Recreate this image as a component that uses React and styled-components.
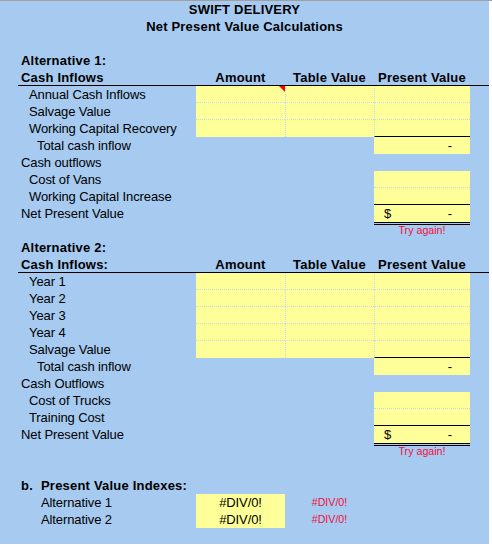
import React from 'react';
import styled, { createGlobalStyle, css } from 'styled-components';

const GlobalStyle = createGlobalStyle`
    html, body {
        margin: 0;
        padding: 0;
        background: #fff;
    }
    body {
        font-family: "Liberation Sans", Arial, sans-serif;
        font-size: 13px;
        letter-spacing: -0.1px;
        color: #000;
    }
`;

const Frame = styled.div`
    width: 492px;
    border-top: 1px solid #a0a0a0;
`;

const Sheet = styled.div`
    width: 489px;
    height: 543px;
    background: #a6caf0;
`;

const TitleLine = styled.div`
    height: 17px;
    line-height: 17px;
    text-align: center;
    font-weight: 700;
    letter-spacing: 0.2px;
`;

const Body = styled.div`
    padding-left: 18px;
`;

const Row = styled.div`
    display: grid;
    grid-template-columns: 178px 89px 89px 96px;
    grid-template-rows: 1fr;
    height: 17px;
    line-height: 17px;
    box-sizing: border-box;
    ${(p) => p.$rule && 'border-bottom: 1px solid #000;'}
`;

const rules = {
    dot: '1px dotted #c4d8f6',
    solid: '1px solid #000',
};

const Cell = styled.div`
    position: relative;
    box-sizing: border-box;
    white-space: nowrap;
    background: ${(p) => (p.$fill ? '#ffff99' : 'transparent')};
    border-bottom: ${(p) => rules[p.$under] || 'none'};
    border-left: ${(p) => (p.$split ? rules.dot : 'none')};
    text-align: ${(p) => p.$align || 'left'};
    font-weight: ${(p) => (p.$bold ? 700 : 400)};
    letter-spacing: ${(p) => (p.$bold ? '0.2px' : '-0.1px')};

    ${(p) =>
        p.$double &&
        css`
            border-bottom: 1px solid #000;
            box-shadow: 0 1px 0 #a6caf0, 0 2px 0 #000;
        `}

    ${(p) =>
        p.$note &&
        css`
            &::after {
                content: '';
                position: absolute;
                top: 0;
                right: 0;
                border-top: 6px solid #ff0000;
                border-left: 6px solid transparent;
            }
        `}
`;

const Label = styled.div`
    padding-left: ${(p) => p.$indent}px;
    font-weight: ${(p) => (p.$bold ? 700 : 400)};
    letter-spacing: ${(p) => (p.$bold ? '0.2px' : '-0.1px')};
    white-space: nowrap;
`;

const Money = styled(Cell)`
    display: flex;
    justify-content: ${(p) => (p.$dollar ? 'space-between' : 'flex-end')};
    padding: 0 18px 0 10px;
`;

const Warning = styled.div`
    color: #f0103c;
    font-size: 10.67px;
    letter-spacing: 0;
    text-align: center;
`;

const Marker = styled.span`
    display: inline-block;
    width: 20px;
`;

const Empty = styled.div`
    height: 17px;
`;

const Section = ({ title, heading, inflows, outflowLabel, outflows }) => (
    <>
        <Row>
            <Label $indent={3} $bold>
                {title}
            </Label>
        </Row>
        <Row $rule>
            <Label $indent={3} $bold>
                {heading}
            </Label>
            <Cell $align="center" $bold>
                Amount
            </Cell>
            <Cell $align="center" $bold>
                Table Value
            </Cell>
            <Cell $align="center" $bold>
                Present Value
            </Cell>
        </Row>
        {inflows.map((item, i) => {
            const last = i === inflows.length - 1;
            return (
                <Row key={item.label}>
                    <Label $indent={11}>{item.label}</Label>
                    <Cell $fill $under={last ? null : 'dot'} $note={item.note} />
                    <Cell $fill $split $under={last ? null : 'dot'} />
                    <Cell $fill $split $under={last ? 'solid' : 'dot'} />
                </Row>
            );
        })}
        <Row>
            <Label $indent={19}>Total cash inflow</Label>
            <div />
            <div />
            <Money $fill>-</Money>
        </Row>
        <Row>
            <Label $indent={3}>{outflowLabel}</Label>
        </Row>
        {outflows.map((label, i) => (
            <Row key={label}>
                <Label $indent={11}>{label}</Label>
                <div />
                <div />
                <Cell $fill $under={i === outflows.length - 1 ? 'solid' : 'dot'} />
            </Row>
        ))}
        <Row>
            <Label $indent={3}>Net Present Value</Label>
            <div />
            <div />
            <Money $fill $dollar $double>
                <span>$</span>
                <span>-</span>
            </Money>
        </Row>
        <Row>
            <div />
            <div />
            <div />
            <Warning>Try again!</Warning>
        </Row>
    </>
);

const App = () => {
    return (
        <Frame>
            <GlobalStyle />
            <Sheet>
                <TitleLine>SWIFT DELIVERY</TitleLine>
                <TitleLine>Net Present Value Calculations</TitleLine>
                <Empty />
                <Body>
                    <Section
                        title="Alternative 1:"
                        heading="Cash Inflows"
                        inflows={[
                            { label: 'Annual Cash Inflows', note: true },
                            { label: 'Salvage Value' },
                            { label: 'Working Capital Recovery' },
                        ]}
                        outflowLabel="Cash outflows"
                        outflows={['Cost of Vans', 'Working Capital Increase']}
                    />
                    <Section
                        title="Alternative 2:"
                        heading="Cash Inflows:"
                        inflows={[
                            { label: 'Year 1' },
                            { label: 'Year 2' },
                            { label: 'Year 3' },
                            { label: 'Year 4' },
                            { label: 'Salvage Value' },
                        ]}
                        outflowLabel="Cash Outflows"
                        outflows={['Cost of Trucks', 'Training Cost']}
                    />
                    <Empty />
                    <Row>
                        <Label $indent={3} $bold>
                            <Marker>b.</Marker>Present Value Indexes:
                        </Label>
                    </Row>
                    <Row>
                        <Label $indent={23}>Alternative 1</Label>
                        <Cell $fill $align="center" $under="dot">
                            #DIV/0!
                        </Cell>
                        <Warning>#DIV/0!</Warning>
                    </Row>
                    <Row>
                        <Label $indent={23}>Alternative 2</Label>
                        <Cell $fill $align="center">
                            #DIV/0!
                        </Cell>
                        <Warning>#DIV/0!</Warning>
                    </Row>
                </Body>
            </Sheet>
        </Frame>
    );
};

export default App;
